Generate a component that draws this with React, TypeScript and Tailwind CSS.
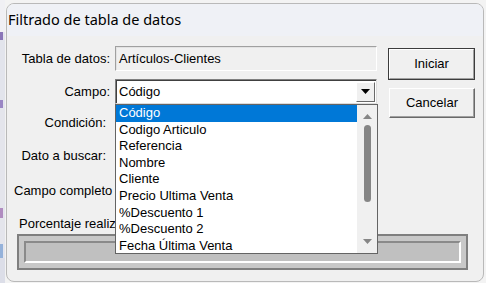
import React from "react";

const items = [
  "Código",
  "Codigo Articulo",
  "Referencia",
  "Nombre",
  "Cliente",
  "Precio Ultima Venta",
  "%Descuento 1",
  "%Descuento 2",
  "Fecha Última Venta",
];

export default function App() {
  const body = { fontFamily: '"Liberation Sans", Arial, sans-serif' };
  return (
    <div className="relative flex w-[486px] h-[283px] overflow-hidden bg-[#f3f3f3]" style={body}>
      {/* desktop strip */}
      <div className="flex flex-col w-[5px] h-full bg-[#e4e5ec]">
        <div className="h-[32px] bg-[#f0f0f4]" />
        <div className="h-[8px] w-[3px] bg-[#8a76b8]" />
        <div className="h-[60px] bg-[#e2e4ec]" />
        <div className="h-[8px] w-[3px] bg-[#9a86c4]" />
        <div className="h-[100px] bg-[#e4e5ec]" />
        <div className="h-[10px] w-[3px] bg-[#b08cc0]" />
        <div className="h-[26px] bg-[#e4e5ec]" />
        <div className="h-[14px] w-[3px] bg-[#95b2da]" />
        <div className="flex-1 bg-[#dcdee8]" />
      </div>
      {/* window */}
      <div className="ml-[1px] mt-[3px] w-[478px] h-[279px] border border-[#b9b9b9] rounded-[8px] overflow-hidden bg-[#f0f0f0] flex flex-col">
        <div
          className="h-[32px] shrink-0 bg-[#eff1f6] pl-[1px] flex items-center text-[14.5px] text-black"
          style={{ fontFamily: '"Noto Sans", "Open Sans", sans-serif' }}
        >
          Filtrado de tabla de datos
        </div>
        <div className="relative flex-1 flex text-[13px] text-black">
          {/* left column */}
          <div className="flex flex-col w-[370px]">
            <div className="mt-[10px] flex items-center h-[25px]">
              <div className="w-[103px] text-right">Tabla de datos:</div>
              <div className="ml-[5px] w-[262px] h-[25px] bg-[#f0f0f0] border-t border-l border-[#a0a0a0] border-r border-b border-r-white border-b-white shadow-[inset_1px_1px_0_#e3e3e3] flex items-center pl-[3px]">
                Artículos-Clientes
              </div>
            </div>
            <div className="mt-[8px] flex items-center h-[25px]">
              <div className="w-[103px] text-right">Campo:</div>
              <div className="ml-[5px] w-[262px] h-[25px] bg-white border-t border-l border-[#808080] border-r border-b border-r-[#dcdcdc] border-b-[#dcdcdc] shadow-[inset_1px_1px_0_#404040] flex items-center justify-between pl-[3px] pr-[1px]">
                <span>Código</span>
                <div className="w-[19px] h-[20px] bg-[#f0f0f0] border border-t-white border-l-white border-r-[#696969] border-b-[#696969] flex items-center justify-center">
                  <svg width="9" height="5" viewBox="0 0 9 5">
                    <path d="M0 0 H9 L4.5 5 Z" fill="#000" />
                  </svg>
                </div>
              </div>
            </div>
            <div className="mt-[9px] h-[20px] flex items-center">
              <div className="w-[103px] text-right pr-[4px]">Condición:</div>
            </div>
            <div className="mt-[13px] h-[20px] flex items-center">
              <div className="w-[103px] text-right pr-[4px]">Dato a buscar:</div>
            </div>
            <div className="mt-[15px] h-[20px] flex items-center pl-[7px] whitespace-nowrap">
              Campo completo
            </div>
            <div className="mt-[13px] h-[20px] flex items-center pl-[12px]">
              <div className="w-[96px] overflow-hidden whitespace-nowrap">Porcentaje realizado</div>
            </div>
          </div>
          {/* right buttons */}
          <div className="flex flex-col ml-[11px]">
            <div className="mt-[12px] w-[87px] h-[32px] border border-[#3c3c3c] bg-[#f0f0f0]">
              <div className="w-full h-full border border-t-white border-l-white border-r-[#a0a0a0] border-b-[#a0a0a0] flex items-center justify-center">
                Iniciar
              </div>
            </div>
            <div className="mt-[8px] ml-[1px] w-[86px] h-[30px] border border-t-white border-l-white border-r-[#696969] border-b-[#696969] bg-[#f0f0f0] shadow-[inset_-1px_-1px_0_#a0a0a0]">
              <div className="w-full h-full flex items-center justify-center">Cancelar</div>
            </div>
          </div>

          {/* progress bar */}
          <div className="absolute left-[10px] top-[198px] w-[451px] h-[36px] border-2 border-[#7f7f7f] bg-[#c8c8c8] p-[5px]">
            <div className="w-full h-full border-t-2 border-l-2 border-[#8a8a8a] border-r-2 border-b-2 border-r-white border-b-white bg-[#c0c0c0]" />
          </div>

          {/* dropdown list */}
          <div className="absolute left-[108px] top-[68px] w-[263px] h-[150px] bg-white border border-[#646464] flex z-10">
            <div className="flex-1 flex flex-col">
              {items.map((t, i) => (
                <div
                  key={t}
                  className={
                    i === 0
                      ? "h-[16.6px] leading-[16.6px] pl-[3px] bg-[#0078d7] text-white whitespace-nowrap"
                      : "h-[16.6px] leading-[16.6px] pl-[3px] text-black whitespace-nowrap"
                  }
                >
                  {t}
                </div>
              ))}
            </div>
            <div className="w-[20px] h-full bg-[#f0f0f0] flex flex-col items-center">
              <svg className="mt-[9px]" width="9" height="5" viewBox="0 0 9 5">
                <path d="M0 5 H9 L4.5 0 Z" fill="#868686" />
              </svg>
              <div className="mt-[6px] w-[7px] h-[77px] rounded-full bg-[#858585]" />
              <div className="flex-1" />
              <svg className="mb-[9px]" width="9" height="5" viewBox="0 0 9 5">
                <path d="M0 0 H9 L4.5 5 Z" fill="#868686" />
              </svg>
            </div>
          </div>
        </div>
      </div>
    </div>
  );
}
